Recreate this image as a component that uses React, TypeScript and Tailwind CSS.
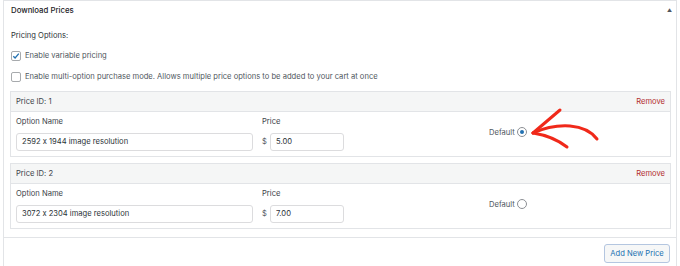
import React from "react";

type PriceRow = {
  id: number;
  name: string;
  amount: string;
  isDefault: boolean;
};

const rows: PriceRow[] = [
  { id: 1, name: "2592 x 1944 image resolution", amount: "5.00", isDefault: true },
  { id: 2, name: "3072 x 2304 image resolution", amount: "7.00", isDefault: false },
];

const Checkbox = ({ checked }: { checked?: boolean }) => (
  <span className="w-[10px] h-[10px] rounded-[2px] border border-[#a7aaad] bg-white flex items-center justify-center shrink-0">
    {checked && (
      <svg width="8" height="8" viewBox="0 0 8 8">
        <path d="M1.3 4.2 L3.1 6 L6.8 1.6" fill="none" stroke="#2271b1" strokeWidth="1.3" />
      </svg>
    )}
  </span>
);

const PriceBox = ({ row }: { row: PriceRow }) => (
  <div className="border border-[#e2e4e7] bg-white">
    <div className="h-[20px] bg-[#f5f6f6] border-b border-[#e2e4e7] px-[5px] flex items-center justify-between">
      <span className="text-[#3c434a]">Price ID: {row.id}</span>
      <span className="text-[#b32d2e]">Remove</span>
    </div>
    <div className="flex px-[5px] pt-[4px] pb-[5px]">
      <div className="w-[237px] flex flex-col">
        <span className="h-[11px] leading-[11px] text-[#3c434a]">Option Name</span>
        <div className="mt-[6px] h-[18px] border border-[#dcdcde] rounded-[3px] px-[5px] flex items-center text-[#2c3338]">
          {row.name}
        </div>
      </div>
      <div className="ml-[9px] w-[82px] flex flex-col">
        <span className="h-[11px] leading-[11px] text-[#3c434a]">Price</span>
        <div className="mt-[6px] flex items-center">
          <span className="text-[#50575e] w-[8px]">$</span>
          <div className="w-[74px] h-[18px] border border-[#dcdcde] rounded-[3px] px-[5px] flex items-center text-[#2c3338]">
            {row.amount}
          </div>
        </div>
      </div>
      <div className="ml-[145px] pt-[11px] flex items-start">
        <span className="text-[#50575e] leading-[11px]">Default</span>
        <span className="ml-[2px] w-[10px] h-[10px] rounded-full border border-[#8c8f94] bg-white flex items-center justify-center">
          {row.isDefault && <span className="w-[4px] h-[4px] rounded-full bg-[#2271b1]" />}
        </span>
      </div>
    </div>
  </div>
);

export default function App() {
  return (
    <div
      className="relative w-[680px] h-[266px] bg-white overflow-hidden text-[7.6px] leading-none [font-feature-settings:'calt'_0]"
      style={{ fontFamily: "Inter, 'Liberation Sans', sans-serif" }}
    >
      <div className="ml-[3px] w-[674px] h-[280px] border border-[#e2e4e7] bg-white">
        <div className="h-[19px] flex items-center justify-between pl-[7px] pr-[4px]">
          <span className="text-[#1d2327] font-medium text-[7.8px]">Download Prices</span>
          <span className="text-[#50575e] text-[5px]">▲</span>
        </div>

        <div className="pl-[7px] pt-[11px]">
          <div className="h-[10px] flex items-center text-[#2c3338]">Pricing Options:</div>
          <div className="mt-[10px] h-[10px] flex items-center gap-[4px] text-[#50575e]">
            <Checkbox checked />
            <span>Enable variable pricing</span>
          </div>
          <div className="mt-[11px] h-[10px] flex items-center gap-[4px] text-[#50575e]">
            <Checkbox />
            <span>
              Enable multi-option purchase mode. Allows multiple price options to be added to your cart at once
            </span>
          </div>
        </div>

        <div className="mt-[9px] ml-[6px] mr-[5px] flex flex-col gap-[6px]">
          {rows.map((row) => (
            <PriceBox key={row.id} row={row} />
          ))}
        </div>

        <div className="mt-[8px] border-t border-[#e2e4e7] flex justify-end pr-[6px] pt-[6px]">
          <button className="w-[66px] h-[19px] border border-[#b4c6e0] rounded-[3px] bg-[#f6f7f7] text-[#2271b1]">
            Add New Price
          </button>
        </div>
      </div>

      <svg
        className="absolute left-[528px] top-[106px]"
        width="74"
        height="46"
        viewBox="0 0 74 46"
        fill="none"
        stroke="#f0291a"
        strokeWidth="3"
        strokeLinecap="round"
        strokeLinejoin="round"
      >
        <path d="M5 27 C 14 23, 28 19, 42 20 C 54 21, 63 25, 69 33" />
        <path d="M5 27 L 32 4" />
        <path d="M5 27 C 18 29, 30 34, 39 41" />
      </svg>
    </div>
  );
}
